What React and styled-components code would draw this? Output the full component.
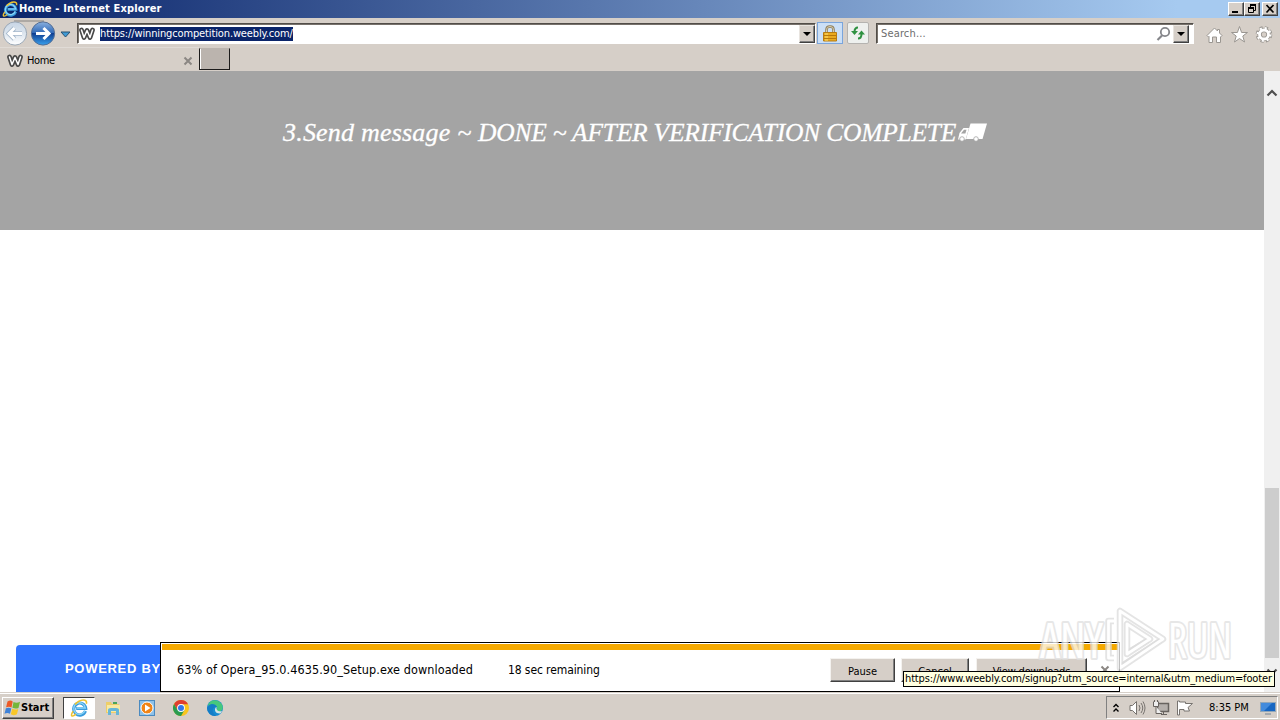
import React from 'react';
import styled, { createGlobalStyle } from 'styled-components';

const GlobalStyle = createGlobalStyle`
  * {
    box-sizing: border-box;
  }
  body {
    margin: 0;
    overflow: hidden;
    font-family: "DejaVu Sans Condensed", "DejaVu Sans", sans-serif;
    font-stretch: condensed;
    font-size: 11px;
    color: #000;
  }
  svg {
    display: block;
    flex: none;
  }
`;

const Desktop = styled.div`
  position: relative;
  width: 1280px;
  height: 720px;
  display: flex;
  flex-direction: column;
  background: #d6cfc8;
  white-space: nowrap;
`;

const Label = styled.span`
  display: block;
  font-size: ${p => p.$size || 11}px;
  letter-spacing: ${p => p.$track || 0}px;
  line-height: 14px;
`;

/* title bar */

const TitleBar = styled.header`
  height: 18px;
  padding: 0 2px 0 2px;
  display: flex;
  align-items: center;
  background: linear-gradient(90deg, #0a246a 0%, #a6caf0 92%);
  color: #fff;
`;

const Title = styled(Label)`
  flex: 1;
  padding-left: 1px;
  font-weight: bold;
`;

const WindowButton = styled.button`
  width: 16px;
  height: 14px;
  margin-left: ${p => p.$gap || 0}px;
  padding: 0;
  display: flex;
  align-items: center;
  justify-content: center;
  background: #d6cfc8;
  border: 1px solid;
  border-color: #fff #404040 #404040 #fff;
  box-shadow: inset -1px -1px 0 #808080;
`;

/* navigation bar */

const NavBar = styled.div`
  height: 29px;
  display: flex;
  align-items: flex-start;
  padding: 5px 7px 0 2px;
`;

const NavButtons = styled.div`
  width: 75px;
  height: 26px;
  margin-top: -3px;
`;

const Field = styled.div`
  width: ${p => p.$width}px;
  height: 21px;
  display: flex;
  align-items: center;
  padding: 1px ${p => p.$right}px 0 1px;
  background: #fff;
  border: 1px solid;
  border-color: #514d48 #fff #fff #514d48;
  box-shadow: inset 1px 1px 0 #77716b;
`;

const Url = styled(Label)`
  margin-left: 5px;
  background: #0a246a;
  color: #fff;
`;

const Hint = styled(Label)`
  padding-left: 3px;
  color: #6d6d6d;
`;

const Spacer = styled.div`
  flex: 1;
`;

const DropButton = styled.button`
  width: 16px;
  height: 18px;
  padding: 0;
  display: flex;
  align-items: center;
  justify-content: center;
  background: #d6cfc8;
  border: 1px solid;
  border-color: #e8e4df #404040 #404040 #e8e4df;
  box-shadow: inset -1px -1px 0 #808080;
`;

const ToolButton = styled.button`
  width: ${p => p.$width}px;
  height: 22px;
  margin: -1px ${p => p.$after}px 0 ${p => p.$before}px;
  padding: 0;
  display: flex;
  align-items: center;
  justify-content: center;
  background: ${p => (p.$active ? '#cbdff6' : '#eef0ee')};
  border: 1px solid ${p => (p.$active ? '#7aa5dc' : '#b5b3b0')};
  border-radius: ${p => (p.$active ? 0 : 2)}px;
`;

const Tools = styled.div`
  display: flex;
  gap: 6px;
  margin: 2px 0 0 11px;
`;

/* tabs */

const TabBar = styled.div`
  height: 24px;
  display: flex;
  align-items: flex-start;
`;

const Tab = styled.div`
  width: 199px;
  height: 24px;
  display: flex;
  align-items: center;
  padding: 2px 6px 0 7px;
  gap: 4px;
  border-top: 1px solid #e0dbd6;
`;

const NewTab = styled.div`
  width: 31px;
  height: 22px;
  margin-top: 1px;
  background: #bbb4ae;
  border: 1px solid #1c1b1a;
  border-top-color: #bbb4ae;
  box-shadow: inset 1px 0 0 #fff;
`;

/* page */

const Viewport = styled.main`
  height: 621px;
  display: flex;
  background: #fff;
`;

const Page = styled.div`
  flex: 1;
  display: flex;
  flex-direction: column;
  justify-content: space-between;
`;

const Banner = styled.section`
  height: 159px;
  padding-top: 44px;
  display: flex;
  align-items: flex-start;
  background: #a4a4a4;
  color: #fff;
`;

const Headline = styled.h2`
  margin: 0 0 0 283px;
  width: 674px;
  font-family: "Liberation Serif", serif;
  font-size: 26px;
  font-style: italic;
  font-weight: 400;
  line-height: 36px;
  letter-spacing: 0.2px;
  -webkit-text-stroke: 0.3px #fff;
`;

const Caps = styled.span`
  font-size: 25.5px;
  letter-spacing: -0.22px;
`;

const Powered = styled.div`
  width: 230px;
  height: 47px;
  margin-left: 16px;
  padding-left: 49px;
  background: #2f74ff;
  border-radius: 4px 4px 0 0;
  color: #fff;
  font-family: "Liberation Sans", sans-serif;
  font-size: 13px;
  font-weight: bold;
  line-height: 47px;
  letter-spacing: 0.7px;
`;

const Scrollbar = styled.div`
  width: 16px;
  display: flex;
  flex-direction: column;
  align-items: center;
  justify-content: space-between;
  padding: 18px 0 16px;
  background: #f0f0f0;
`;

const Thumb = styled.div`
  width: 14px;
  height: 170px;
  margin-top: auto;
  margin-bottom: 10px;
  background: #cdcdcd;
`;

/* download prompt and status tooltip, both over the page */

const DownloadBar = styled.div`
  position: absolute;
  left: 160px;
  top: 642px;
  width: 960px;
  height: 50px;
  background: #fff;
  border: 1px solid #000;
  padding: 1px;
`;

const Stripe = styled.div`
  height: 6px;
  background: #f5a900;
`;

const DownloadRow = styled.div`
  display: flex;
  align-items: center;
  height: 40px;
  padding: 0 0 0 15px;
`;

const Status = styled(Label)`
  width: ${p => p.$width}px;
`;

const PushButton = styled.button`
  width: ${p => p.$width}px;
  height: 24px;
  margin-right: ${p => p.$gap}px;
  padding: 2px 0 0;
  font: inherit;
  letter-spacing: ${p => p.$track || 0}px;
  color: #000;
  background: #d6cfc8;
  border: 1px solid;
  border-color: #f4f2ef #404040 #404040 #f4f2ef;
  box-shadow: inset -1px -1px 0 #808080;
`;

const Tooltip = styled.div`
  position: absolute;
  left: 903px;
  top: 671px;
  width: 372px;
  height: 16px;
  padding-left: 1px;
  background: #ffffe1;
  border: 1px solid #000;
`;

const Watermark = styled.svg`
  position: absolute;
  left: 1030px;
  top: 602px;
  overflow: visible;
  opacity: 0.75;
`;

/* taskbar */

const Taskbar = styled.footer`
  height: 28px;
  display: flex;
  align-items: center;
  padding: 2px 0 0 2px;
  border-top: 1px solid #d6cfc8;
  box-shadow: inset 0 1px 0 #fff;
`;

const StartButton = styled.button`
  width: 52px;
  height: 22px;
  padding: 0 0 0 1px;
  display: flex;
  align-items: center;
  gap: 0;
  font: inherit;
  font-weight: bold;
  background: #d6cfc8;
  border: 1px solid;
  border-color: #fff #404040 #404040 #fff;
  box-shadow: inset -1px -1px 0 #808080;
`;

const TaskItem = styled.div`
  width: 32px;
  height: 22px;
  margin-left: ${p => p.$gap}px;
  display: flex;
  align-items: center;
  justify-content: center;
  ${p => p.$active && `
    background: #fff;
    border: 1px solid;
    border-color: #404040 #fff #fff #404040;
  `}
`;

const Tray = styled.div`
  width: 172px;
  height: 23px;
  margin: 0 2px 0 auto;
  display: flex;
  align-items: center;
  padding: 0 1px 0 6px;
  border: 1px solid;
  border-color: #808080 #fff #fff #808080;
`;

const TrayIcon = styled.div`
  margin-right: ${p => p.$gap}px;
`;

const IeIcon = ({ size }) => (
  <svg width={size} height={size} viewBox="0 0 18 18" fill="none">
    <path d="M15.400 12A6 6 0 1 1 15.700 9.500H6.200" stroke="#3a9bdc" strokeWidth="3.200" />
    <path d="M15 11.500A5.800 5.800 0 1 1 15.300 9H7" stroke="#8bd6f8" strokeWidth="1.300" />
    <path d="M3.200 12.200C-.2 17.200 2 18.500 6 15.200M5 5.400C10-.1 17.900-.5 16.300 4.800" stroke="#edc332" strokeWidth="1.600" />
  </svg>
);

const WeeblyIcon = () => (
  <svg width="16" height="14" viewBox="0 0 16 14" fill="none" strokeLinejoin="round" strokeLinecap="round">
    <path d="M2.500 3L5 10.500L8 3.500L11 10.500L13.500 3" stroke="#484848" strokeWidth="4.800" />
    <path d="M2.500 3L5 10.500L8 3.500L11 10.500L13.500 3" stroke="#fff" strokeWidth="1.500" />
  </svg>
);

const Caret = () => (
  <svg width="8" height="4" viewBox="0 0 8 4"><path d="M0 0H8L4 4Z" fill="#000" /></svg>
);

const CloseMark = () => (
  <svg width="10" height="10">
    <path d="M1.500 1.500L8.500 8.500M8.500 1.500L1.500 8.500" stroke="#8b8783" strokeWidth="2" />
  </svg>
);

const BackForward = () => (
  <svg width="74" height="26" viewBox="2 20 74 26" fill="none">
    <defs>
      <linearGradient id="pale" x2="0" y2="1">
        <stop stopColor="#c7d5e5" /><stop offset=".5" stopColor="#dce5ee" /><stop offset="1" stopColor="#fff" />
      </linearGradient>
      <linearGradient id="blue" x2="0" y2="1">
        <stop stopColor="#8ab0df" /><stop offset=".46" stopColor="#336bb8" /><stop offset=".5" stopColor="#103f92" /><stop offset="1" stopColor="#39a0ed" />
      </linearGradient>
    </defs>
    <path d="M14 21H44" stroke="#a19d99" strokeWidth="1.500" />
    <circle cx="15" cy="33.500" r="11.600" fill="url(#pale)" stroke="#9aa7b5" />
    <circle cx="43" cy="33.500" r="11.600" fill="url(#blue)" stroke="#536e95" />
    <path d="M22 33.500H9M14.500 28L9 33.500L14.500 39" stroke="#a5b8cc" strokeWidth="4.600" />
    <path d="M22 33.500H9M14.500 28L9 33.500L14.500 39" stroke="#fff" strokeWidth="3" />
    <path d="M36 33.500H49M43.500 28L49 33.500L43.500 39" stroke="#fff" strokeWidth="3" />
    <path d="M61 32H70L65.500 37Z" fill="#3f9bd6" stroke="#29506f" />
  </svg>
);

const WindowsLogo = () => (
  <svg width="17" height="16" viewBox="0 0 16 16">
    <path d="M3 1.500Q6-.5 8.200 1.500L7 7.500Q4.600 6 1.600 7.300Z" fill="#ed5a27" />
    <path d="M9 2Q12 3.500 15.500 1.800L14 8Q11 9.300 7.900 7.800Z" fill="#75b63b" />
    <path d="M1.400 8.200Q4.500 7 6.800 8.400L5.500 13.800Q3 12.500 0 13.700Z" fill="#3e82d8" />
    <path d="M7.700 8.800Q10.600 10.200 13.800 9L12.400 14.200Q9 16 6.300 14.300Z" fill="#f8c729" />
  </svg>
);

const Truck = () => (
  <svg width="31" height="36" viewBox="0 0 31 36">
    <path d="M13.500 8.500H30L25.500 24H9Z" fill="#fff" />
    <path d="M1 24.500L2.500 18L6.500 13H12L8.700 24.500Z" fill="#fff" />
    <path d="M4 18.500L7 14.800H9.500L8.400 18.500Z" fill="#a4a4a4" />
    <circle cx="5" cy="24" r="2.300" fill="#fff" stroke="#a4a4a4" strokeWidth=".8" />
    <circle cx="19" cy="24" r="2.300" fill="#fff" stroke="#a4a4a4" strokeWidth=".8" />
  </svg>
);

const LOGO_PATH = 'M1114 621H1108.500V658H1114M1120 611V668L1163 639ZM1127 624V654L1150 639Z';

const App = () => (
  <>
    <GlobalStyle />
    <Desktop>
      <TitleBar>
        <IeIcon size={16} />
        <Title $track={0.15}>Home - Internet Explorer</Title>
        <WindowButton aria-label="Minimize">
          <svg width="10" height="10"><path d="M1 8H7" stroke="#000" strokeWidth="2" /></svg>
        </WindowButton>
        <WindowButton aria-label="Restore">
          <svg width="10" height="10" fill="none" stroke="#000">
            <path d="M3.500 3V1.500H8.500V6.500H7M3 1.500H9M1.500 4.500H6.500V8.500H1.500ZM1 4.500H7" />
            <path d="M3 1H9M1 4H7" strokeWidth="2" />
          </svg>
        </WindowButton>
        <WindowButton $gap={2} aria-label="Close">
          <svg width="10" height="10"><path d="M1.500 1L8.500 8.500M8.500 1L1.500 8.500" stroke="#000" strokeWidth="1.700" /></svg>
        </WindowButton>
      </TitleBar>

      <NavBar>
        <NavButtons><BackForward /></NavButtons>
        <Field $width={739} $right={0}>
          <WeeblyIcon />
          <Url $track={-0.13}>https://winningcompetition.weebly.com/</Url>
          <Spacer />
          <DropButton aria-label="Show addresses"><Caret /></DropButton>
        </Field>
        <ToolButton $width={26} $before={1} $after={4} $active aria-label="Security report">
          <svg width="14" height="17" fill="none">
            <path d="M3.500 8V4.500Q3.500 1.500 7 1.500T10.500 4.500V8" stroke="#8b7b58" strokeWidth="2.500" />
            <path d="M3.500 8V4.500Q3.500 1.500 7 1.500T10.500 4.500V8" stroke="#d9cfb0" />
            <path d="M.5 7.500H13.500V16H.5Z" fill="#e9aa21" stroke="#b77c12" />
            <path d="M1 10.500H13M1 13.500H13" stroke="#b8780b" />
            <path d="M2 9H5M2 12H5M2 15H5" stroke="#ffe16d" />
          </svg>
        </ToolButton>
        <ToolButton $width={22} $before={0} $after={7} aria-label="Refresh">
          <svg width="16" height="14" fill="none">
            <path d="M8 1.500Q4.500 1.500 4.500 6" stroke="#2f9141" strokeWidth="2" />
            <path d="M1 5H8L4.500 9Z" fill="#2f9141" />
            <path d="M8 12.500Q11.500 12.500 11.500 8" stroke="#2f9141" strokeWidth="2" />
            <path d="M8 8.500H15L11.500 4.500Z" fill="#2f9141" />
          </svg>
        </ToolButton>
        <Field $width={318} $right={4}>
          <Hint $track={0.15}>Search...</Hint>
          <Spacer />
          <svg width="17" height="16" fill="none" stroke="#85868a">
            <circle cx="9" cy="6" r="4.200" strokeWidth="1.800" />
            <path d="M6 9.500L1.500 14" strokeWidth="2.200" />
          </svg>
          <DropButton aria-label="Search providers"><Caret /></DropButton>
        </Field>
        <Tools>
          <svg width="19" height="19" fill="#fff" stroke="#9a9691">
            <path d="M2 10.500L9.500 3L12.500 6V4.500H14.500V8L17 10.500L15.500 12V17.500H11.500V12H7.500V17.500H4V11.500L3.500 12Z" />
          </svg>
          <svg width="19" height="19" fill="#fff" stroke="#9a9691">
            <path d="M9.500 1.500L11.600 7.500H17.500L12.800 11L14.500 17L9.500 13.500L4.500 17L6.200 11L1.500 7.500H7.400Z" />
          </svg>
          <svg width="18" height="19" viewBox="0 0 18 19" fill="none">
            <circle cx="9" cy="9.500" r="6.500" stroke="#9a9691" strokeWidth="3.600" strokeDasharray="3 2.105" />
            <circle cx="9" cy="9.500" r="4.500" stroke="#9a9691" strokeWidth="4.500" />
            <circle cx="9" cy="9.500" r="6.300" stroke="#fff" strokeWidth="2.400" strokeDasharray="2 2.948" />
            <circle cx="9" cy="9.500" r="4.500" stroke="#fff" strokeWidth="2.800" />
          </svg>
        </Tools>
      </NavBar>

      <TabBar>
        <Tab>
          <WeeblyIcon />
          <Label $track={-0.4}>Home</Label>
          <Spacer />
          <CloseMark />
        </Tab>
        <NewTab />
      </TabBar>

      <Viewport>
        <Page>
          <Banner>
            <Headline>3.Send message ~ <Caps>DONE ~ AFTER VERIFICATION COMPLETE</Caps></Headline>
            <Truck />
          </Banner>
          <Powered>POWERED BY</Powered>
        </Page>
        <Scrollbar>
          <svg width="12" height="8" fill="none"><path d="M1.500 6.500L6 2L10.500 6.500" stroke="#505050" strokeWidth="2.200" /></svg>
          <Thumb />
          <svg width="12" height="8" fill="none"><path d="M1.500 1.500L6 6L10.500 1.500" stroke="#505050" strokeWidth="2.200" /></svg>
        </Scrollbar>
      </Viewport>

      <Taskbar>
        <StartButton><WindowsLogo />Start</StartButton>
        <TaskItem $gap={9} $active><IeIcon size={18} /></TaskItem>
        <TaskItem $gap={2}>
          <svg width="16" height="16">
            <path d="M1 2H6L7 4H14V13H1Z" fill="#edce68" />
            <path d="M2 5H15V12H2Z" fill="#f8e9a3" />
            <path d="M3 15V10Q3 8 6 8H11Q14 8 14 10V15H11V11H6V15Z" fill="#67b6d7" />
            <path d="M8 3H12" stroke="#4aa45b" strokeWidth="2" />
          </svg>
        </TaskItem>
        <TaskItem $gap={2}>
          <svg width="16" height="16">
            <rect x=".5" y=".5" width="15" height="15" fill="#8dc1e9" stroke="#4b8ac0" />
            <circle cx="8" cy="8" r="6" fill="#f18416" stroke="#fff" />
            <path d="M6 4.500L11.500 8L6 11.500Z" fill="#fff" />
          </svg>
        </TaskItem>
        <TaskItem $gap={2}>
          <svg width="16" height="16" viewBox="0 0 16 16">
            <circle cx="8" cy="8" r="8" fill="#f9c51e" />
            <path d="M1.070 4A8 8 0 0 1 15 4.200H8L4.500 10Z" fill="#df3e30" />
            <path d="M1.070 4A8 8 0 0 0 8 16L11.500 10H4.500Z" fill="#2a9b50" />
            <circle cx="8" cy="8" r="3.900" fill="#fff" />
            <circle cx="8" cy="8" r="3" fill="#3377e8" />
          </svg>
        </TaskItem>
        <TaskItem $gap={2}>
          <svg width="16" height="16" viewBox="0 0 16 16">
            <circle cx="8" cy="8" r="8" fill="#168bd2" />
            <path d="M1 5C3 0 8-.5 11 1C15 3 17 7 15 10C13 12 10 11 9.500 10C12 6 7 3 1 6Z" fill="#46c87d" />
            <path d="M0 8C2 3 8 3 10 7C5 6 4 12 9 15.900A8 8 0 0 1 0 8Z" fill="#147dc6" />
            <path d="M9.500 7C7 8 7 14 13.500 13.500L15 11C12 12 9 11 9.500 7Z" fill="#d6e6e4" />
          </svg>
        </TaskItem>
        <Tray>
          <TrayIcon $gap={10}>
            <svg width="6" height="10" fill="none" stroke="#000" strokeWidth="1.400"><path d="M.5 4L3 1.500L5.500 4M.5 8.500L3 6L5.500 8.500" /></svg>
          </TrayIcon>
          <TrayIcon $gap={7}>
            <svg width="17" height="16" fill="#fff" stroke="#77736f">
              <path d="M1 5.500H3.500L7.500 1.500V14.500L3.500 10.500H1Z" />
              <path d="M10 5Q12 8 10 11M12 3Q15.500 8 12 13M14 1.500Q18 8 14 14.500" fill="none" />
            </svg>
          </TrayIcon>
          <TrayIcon $gap={7}>
            <svg width="17" height="16" fill="#eee" stroke="#68635f">
              <path d="M4.500 3.500H15.500V11.500H4.500Z" fill="#b5b0ac" strokeWidth="1.500" />
              <path d="M8 14.500H14M10.500 12V14" />
              <path d="M.5 1.500V6.500H5.500V1.500M3 6.500V13.500H9M1.500 0V2M4.500 0V2" />
            </svg>
          </TrayIcon>
          <TrayIcon $gap={15}>
            <svg width="17" height="16" fill="#fff" stroke="#77736f">
              <path d="M.5 1V15H2.500V9.500H7V11H12.500L11 7.500L15.500 3.500H8.500V2H2.500V1Z" />
            </svg>
          </TrayIcon>
          <Label>8:35 PM</Label>
          <Spacer />
          <svg width="16" height="14">
            <rect x=".5" y="1.500" width="15" height="9" fill="#1766c2" stroke="#91a6b9" />
            <path d="M1 2H12L4 10H1Z" fill="#438bdc" />
            <path d="M5 13H11" stroke="#718294" />
          </svg>
        </Tray>
      </Taskbar>

      <DownloadBar>
        <Stripe />
        <DownloadRow>
          <Status $width={331} $size={12.5} $track={0.09}>63% of Opera_95.0.4635.90_Setup.exe downloaded</Status>
          <Status $width={322} $size={12} $track={-0.1}>18 sec remaining</Status>
          <PushButton $width={65} $gap={6}>Pause</PushButton>
          <PushButton $width={68} $gap={7}>Cancel</PushButton>
          <PushButton $width={111} $gap={13} $track={-0.15}>View downloads</PushButton>
          <CloseMark />
        </DownloadRow>
      </DownloadBar>

      <Watermark width="212" height="80" viewBox="1030 602 212 80" fontFamily="Open Sans, sans-serif" fontSize="49">
        <g fill="#fff" stroke="#dfdfdf" strokeWidth="4" strokeLinejoin="round" paintOrder="stroke">
          <text x="1040" y="657.500" textLength="63" lengthAdjust="spacingAndGlyphs">ANY</text>
          <text x="1168" y="657.500" textLength="64" lengthAdjust="spacingAndGlyphs">RUN</text>
        </g>
        <g fill="none" strokeLinejoin="round">
          <path d={LOGO_PATH} stroke="#dcdcdc" strokeWidth="6.500" />
          <path d="M1122 665L1161 640M1128 652L1148 640" stroke="#d2d2d2" strokeWidth="5" />
          <path d={LOGO_PATH} stroke="#fff" strokeWidth="2.800" />
        </g>
      </Watermark>

      <Tooltip><Label $track={-0.14}>https://www.weebly.com/signup?utm_source=internal&amp;utm_medium=footer</Label></Tooltip>
    </Desktop>
  </>
);

export default App;
